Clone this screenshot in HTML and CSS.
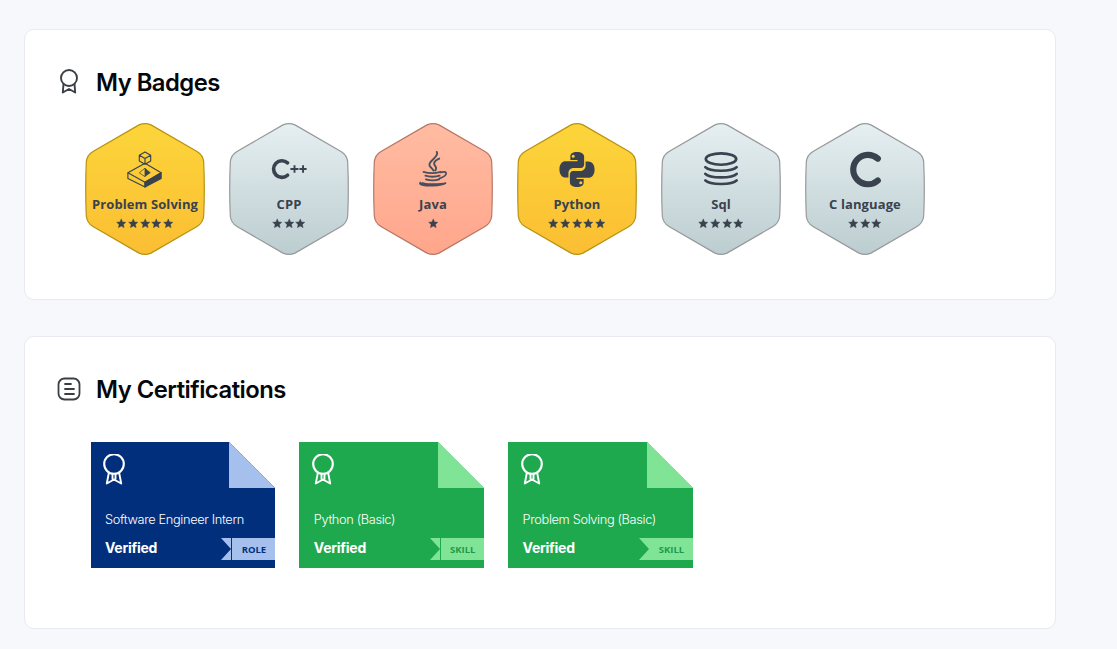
FILE: index.html
```html
<!DOCTYPE html>
<html lang="en">
<head>
<meta charset="utf-8">
<title>My Badges</title>
<link rel="stylesheet" href="styles.css">
</head>
<body>
<svg class="defs" width="0" height="0" aria-hidden="true">
  <defs>
    <linearGradient id="gold" x1="0" y1="0" x2="0" y2="1"><stop offset="0" stop-color="#fcd53a"/><stop offset="1" stop-color="#fbbe33"/></linearGradient>
    <linearGradient id="silver" x1="0" y1="0" x2="0" y2="1"><stop offset="0" stop-color="#e6eff1"/><stop offset="1" stop-color="#bccdd0"/></linearGradient>
    <linearGradient id="bronze" x1="0" y1="0" x2="0" y2="1"><stop offset="0" stop-color="#ffbca2"/><stop offset="1" stop-color="#ffa68c"/></linearGradient>
    <path id="hex" d="M54 1.900Q60 -.6 66 1.900L112 28.500Q118 32 118.700 39Q119.900 66 118.700 93Q118 100 112 103.500L66 130.100Q60 132.600 54 130.100L8 103.500Q2 100 1.300 93Q.1 66 1.300 39Q2 32 8 28.500Z"/>
    <symbol id="star" viewBox="0 0 24 24">
      <path d="M12 2L15 8.900L22.500 9.700L16.900 14.700L18.500 22L12 18.200L5.500 22L7.100 14.700L1.500 9.700L9 8.900Z" fill="currentColor" stroke="currentColor" stroke-width="1" stroke-linejoin="round"/>
    </symbol>
    <symbol id="ribbon" viewBox="0 0 22 31">
      <circle cx="11" cy="10" r="9.800" fill="none" stroke="currentColor" stroke-width="2.100"/>
      <path d="M6 18L3.800 29.500L11 25.500L18.200 29.500L16 18M9.500 20V25.500M12.500 20V25.500" fill="none" stroke="currentColor" stroke-width="1.900" stroke-linejoin="round"/>
    </symbol>
  </defs>
</svg>
<main class="page">
  <section class="card card-badges">
    <h2 class="card-title">
      <svg class="title-icon" viewBox="0 0 24 26" fill="none" stroke="#3a3f45" stroke-width="1.900" stroke-linejoin="round"><circle cx="12" cy="9" r="8"/><path d="M6.500 15L5.800 23.500L12 20L18.200 23.500L17.500 15"/></svg>
      My Badges
    </h2>
    <div class="badges">
      <div class="badge">
        <svg class="hex" viewBox="0 0 120 132"><use href="#hex" fill="url(#gold)" stroke="#b8920f" stroke-width="1.200"/></svg>
        <svg class="badge-icon" viewBox="0 0 40 40" fill="none" stroke="#39424e" stroke-width="1.200" stroke-linejoin="round"><path d="M20 1L26 4.500V10.500L20 14L14 10.500V4.500ZM14 4.500L20 8L26 4.500M20 8V14"/><path d="M20 13L37 23L20 33L2 23Z"/><path d="M2 23V29L20 38V33"/><path d="M20 33V38L37 29V23Z" fill="#39424e"/><path d="M20 18L26 23L20 27Z" fill="#39424e" stroke="none"/><path d="M20 18L14 23L20 27Z" fill="#fbce38" stroke="#39424e" stroke-width=".8"/></svg>
        <p class="badge-name">Problem Solving</p>
        <div class="stars"><svg class="star"><use href="#star"/></svg><svg class="star"><use href="#star"/></svg><svg class="star"><use href="#star"/></svg><svg class="star"><use href="#star"/></svg><svg class="star"><use href="#star"/></svg></div>
      </div>
      <div class="badge">
        <svg class="hex" viewBox="0 0 120 132"><use href="#hex" fill="url(#silver)" stroke="#96999b" stroke-width="1.200"/></svg>
        <svg class="badge-icon" viewBox="0 0 40 40" fill="none" stroke="#39424e"><path d="M18.500 12.500A8.800 8.800 0 1 0 18.500 25.500" stroke-width="3.800" stroke-linecap="round"/><path d="M21.500 19H30M25.800 15V23M31 19H38.500M34.800 15V23" stroke-width="2"/></svg>
        <p class="badge-name">CPP</p>
        <div class="stars"><svg class="star"><use href="#star"/></svg><svg class="star"><use href="#star"/></svg><svg class="star"><use href="#star"/></svg></div>
      </div>
      <div class="badge">
        <svg class="hex" viewBox="0 0 120 132"><use href="#hex" fill="url(#bronze)" stroke="#b87565" stroke-width="1.200"/></svg>
        <svg class="badge-icon" viewBox="0 0 40 40" fill="none" stroke="#4a4f5c" stroke-linecap="round"><path d="M24 1C27 7 14 10 16.500 15.500C17.500 17.500 19.500 18.500 20.500 20.500M26.500 8C21 10.500 20 13 22.500 16C23.500 17.500 23.500 19 22.500 20.500" stroke-width="2"/><path d="M10 22C15 23.500 23 23.500 28 22M12 26C16 27.500 23 27.500 27 26M12.500 29.800C17 31.300 22 31.300 26.500 29.800M28 22.500C36 20 36 26 26.500 29" stroke-width="1.900"/><path d="M6.500 33C4 36 13 37 20 36.500C27 36.300 31.500 35.300 33.700 33.500C28 35 14 35.500 9 33.500" stroke-width="1.500" fill="#4a4f5c"/></svg>
        <p class="badge-name">Java</p>
        <div class="stars"><svg class="star"><use href="#star"/></svg></div>
      </div>
      <div class="badge">
        <svg class="hex" viewBox="0 0 120 132"><use href="#hex" fill="url(#gold)" stroke="#b8920f" stroke-width="1.200"/></svg>
        <svg class="badge-icon" viewBox="0 0 40 40" fill="#39424e"><path d="M19.800 1C14 1 13 3.500 13 6V9.500H20.500V10.800H8C4.500 10.800 1.500 13.500 1.500 19.500C1.500 25 4.500 28 8 28H11V23.500C11 20 13.500 18 17 18H24C26.500 18 27.500 16 27.500 14V6C27.500 3 24.500 1 19.800 1ZM16 4A1.600 1.600 0 1 1 16 7.200A1.600 1.600 0 1 1 16 4Z" fill-rule="evenodd"/><path d="M20.200 38C26 38 27 35.500 27 33V29.500H19.500V28.200H32C35.500 28.200 38.500 25.500 38.500 19.500C38.500 14 35.500 11 32 11H29V15.500C29 19 26.500 21 23 21H16C13.500 21 12.500 23 12.500 25V33C12.500 36 15.500 38 20.200 38ZM24 35A1.600 1.600 0 1 1 24 31.800A1.600 1.600 0 1 1 24 35Z" fill-rule="evenodd"/></svg>
        <p class="badge-name">Python</p>
        <div class="stars"><svg class="star"><use href="#star"/></svg><svg class="star"><use href="#star"/></svg><svg class="star"><use href="#star"/></svg><svg class="star"><use href="#star"/></svg><svg class="star"><use href="#star"/></svg></div>
      </div>
      <div class="badge">
        <svg class="hex" viewBox="0 0 120 132"><use href="#hex" fill="url(#silver)" stroke="#96999b" stroke-width="1.200"/></svg>
        <svg class="badge-icon" viewBox="0 0 40 40" fill="none" stroke="#39424e" stroke-width="2.800" stroke-linecap="round"><ellipse cx="20" cy="8.500" rx="16" ry="6"/><path d="M3.500 17C8 22 32 22 36.500 17M3.500 24C8 29 32 29 36.500 24M3.500 31C8 36 32 36 36.500 31"/></svg>
        <p class="badge-name">Sql</p>
        <div class="stars"><svg class="star"><use href="#star"/></svg><svg class="star"><use href="#star"/></svg><svg class="star"><use href="#star"/></svg><svg class="star"><use href="#star"/></svg></div>
      </div>
      <div class="badge">
        <svg class="hex" viewBox="0 0 120 132"><use href="#hex" fill="url(#silver)" stroke="#96999b" stroke-width="1.200"/></svg>
        <svg class="badge-icon" viewBox="0 0 40 40" fill="none" stroke="#39424e"><path d="M33.500 8A15.500 15.500 0 1 0 33.500 31" stroke-width="6.500" stroke-linecap="round"/></svg>
        <p class="badge-name">C language</p>
        <div class="stars"><svg class="star"><use href="#star"/></svg><svg class="star"><use href="#star"/></svg><svg class="star"><use href="#star"/></svg></div>
      </div>
    </div>
  </section>

  <section class="card card-certs">
    <h2 class="card-title">
      <svg class="title-icon" viewBox="0 0 24 24" fill="none" stroke="#3a3f45" stroke-width="1.800" stroke-linecap="round"><rect x="1.500" y="1.500" width="21" height="21" rx="6"/><path d="M8 7H14M8 12H17M8 17H17"/></svg>
      My Certifications
    </h2>
    <div class="certs">
      <article class="cert cert-role">
        <div class="cert-top"><svg class="cert-icon"><use href="#ribbon"/></svg><svg class="fold" viewBox="0 0 46 46"><path class="fold-cut" d="M0 0H46V46Z"/><path class="fold-flap" d="M0 0L46 46H0Z"/></svg></div>
        <p class="cert-title">Software Engineer Intern</p>
        <div class="cert-foot"><span class="verified">Verified</span><span class="tag"><svg class="tag-tail" viewBox="0 0 11 22"><path d="M0 0H10V22H0L10 11Z"/></svg><span class="tag-label">ROLE</span></span></div>
      </article>
      <article class="cert cert-skill">
        <div class="cert-top"><svg class="cert-icon"><use href="#ribbon"/></svg><svg class="fold" viewBox="0 0 46 46"><path class="fold-cut" d="M0 0H46V46Z"/><path class="fold-flap" d="M0 0L46 46H0Z"/></svg></div>
        <p class="cert-title">Python (Basic)</p>
        <div class="cert-foot"><span class="verified">Verified</span><span class="tag"><svg class="tag-tail" viewBox="0 0 11 22"><path d="M0 0H10V22H0L10 11Z"/></svg><span class="tag-label">SKILL</span></span></div>
      </article>
      <article class="cert cert-skill">
        <div class="cert-top"><svg class="cert-icon"><use href="#ribbon"/></svg><svg class="fold" viewBox="0 0 46 46"><path class="fold-cut" d="M0 0H46V46Z"/><path class="fold-flap" d="M0 0L46 46H0Z"/></svg></div>
        <p class="cert-title">Problem Solving (Basic)</p>
        <div class="cert-foot"><span class="verified">Verified</span><span class="tag"><svg class="tag-tail" viewBox="0 0 11 22"><path d="M0 0H11V22H0L10 11Z"/></svg><span class="tag-label">SKILL</span></span></div>
      </article>
    </div>
  </section>
</main>
</body>
</html>
```
FILE: styles.css
```css
* { box-sizing: border-box; }
html, body { margin: 0; padding: 0; }
body {
  background: #f7f8fc;
  font-family: "Inter", "Liberation Sans", sans-serif;
  overflow: hidden;
  height: 649px;
}
.defs { position: absolute; }
.page {
  display: flex;
  flex-direction: column;
  gap: 36px;
  width: 1056px;
  padding: 29px 0 0 24px;
}
.card {
  background: #fff;
  border: 1px solid #e7eaf0;
  border-radius: 10px;
  padding-left: 32px;
  padding-top: 34px;
}
.card-badges { height: 271px; }
.card-certs { height: 293px; }
.card-title {
  display: flex;
  align-items: center;
  gap: 15px;
  margin: 0;
  height: 36px;
  color: #05070b;
  font-size: 23.800px;
  font-weight: 600;
  letter-spacing: -.5px;
}
.title-icon { width: 24px; height: 26px; flex: none; }
.badges {
  display: flex;
  gap: 24px;
  margin: 23px 0 0 28px;
}
.badge {
  position: relative;
  display: flex;
  flex-direction: column;
  align-items: center;
  width: 120px;
  height: 132px;
  padding-top: 28px;
  font-family: "Open Sans", sans-serif;
}
.hex { position: absolute; inset: 0; width: 120px; height: 132px; overflow: visible; }
.badge-icon { position: relative; width: 38px; height: 38px; flex: none; }
.badge-name {
  position: relative;
  margin: 6px 0 0;
  color: #39424e;
  font-size: 13px;
  font-weight: 700;
  line-height: 18px;
  letter-spacing: .1px;
  white-space: nowrap;
}
.stars {
  position: relative;
  display: flex;
  align-items: center;
  gap: 1.200px;
  height: 18px;
  margin-top: 1px;
  color: #39424e;
}
.star { display: block; width: 10.500px; height: 10.500px; }
.certs {
  display: flex;
  gap: 24px;
  margin: 35px 0 0 33.600px;
}
.cert {
  position: relative;
  display: flex;
  flex-direction: column;
  width: 184.800px;
  height: 126px;
  color: #fff;
}
.cert-role { background: #022f7c; --light: #a6c0ee; --ink: #022f7c; }
.cert-skill { background: #1fa94f; --light: #80e496; --ink: #1d9a4a; }
.cert-top { height: 68px; padding: 12px 0 0 12.400px; }
.cert-icon { display: block; width: 22px; height: 31px; color: #fff; }
.fold { position: absolute; top: 0; right: 0; width: 46px; height: 46px; display: block; }
.fold-cut { fill: #fff; }
.fold-flap { fill: var(--light); }
.cert-title {
  margin: 0;
  padding-left: 14.400px;
  font-size: 12.800px;
  font-weight: 300;
  line-height: 20px;
  letter-spacing: -.35px;
  white-space: nowrap;
}
.cert-foot {
  display: flex;
  justify-content: space-between;
  align-items: center;
  height: 22px;
  margin-top: 8px;
  padding-left: 14.400px;
}
.verified { padding-bottom: 4px; font-size: 14px; font-weight: 700; letter-spacing: -.25px; }
.tag { display: flex; align-items: center; height: 22px; }
.tag-tail { width: 11px; height: 22px; display: block; fill: var(--light); }
.tag-label {
  display: flex;
  align-items: center;
  justify-content: center;
  width: 43px;
  height: 22px;
  background: var(--light);
  color: var(--ink);
  font-family: "Open Sans", sans-serif;
  font-size: 9.500px;
  font-weight: 700;
}
```
